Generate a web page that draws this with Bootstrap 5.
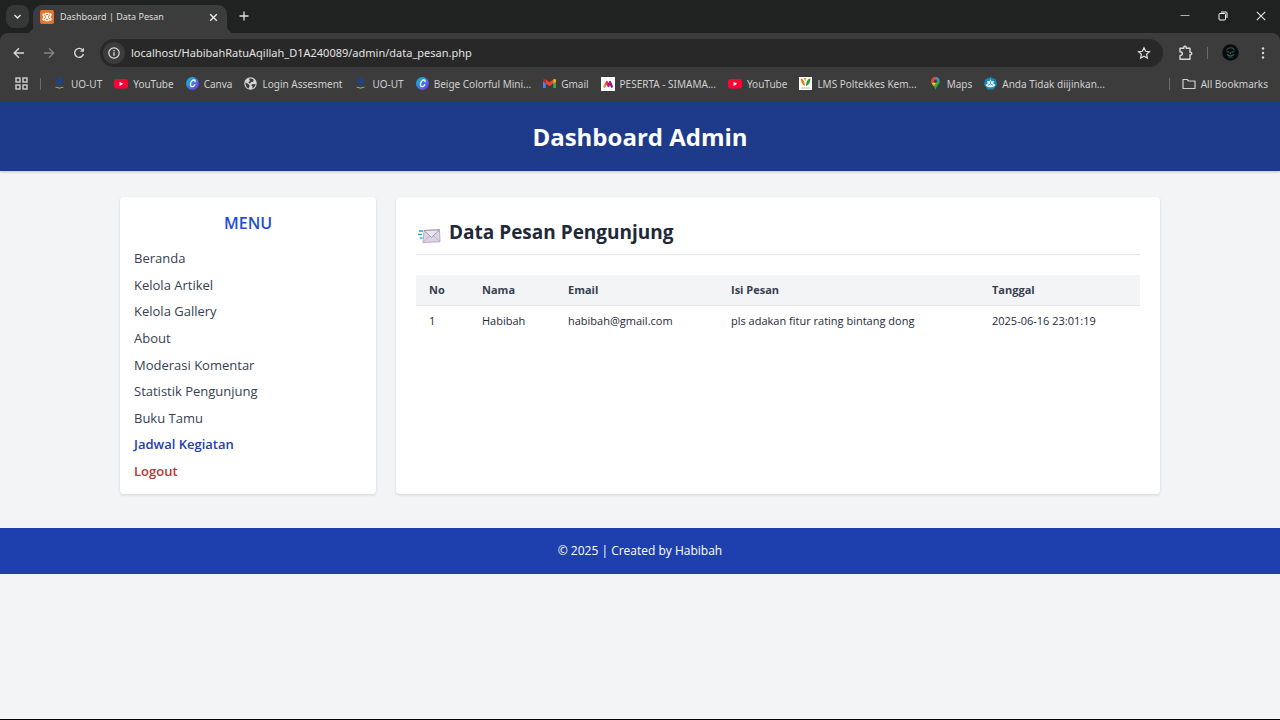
<!DOCTYPE html>
<html lang="id">
<head>
<meta charset="utf-8">
<meta name="viewport" content="width=device-width, initial-scale=1">
<title>Dashboard | Data Pesan</title>
<link rel="stylesheet" href="https://cdn.jsdelivr.net/npm/bootstrap@5.3.0/dist/css/bootstrap.min.css">
<style>
  body { font-family: "Open Sans", "Noto Sans", sans-serif; background: #f3f4f6; color: #1f2937; border-bottom: 1px solid #000; }
  svg { display: block; flex: none; }
  .plain { background: none; border: 0; padding: 0; color: inherit; display: flex; align-items: center; justify-content: center; flex: none; }

  /* browser window */
  .chrome-ui { font-family: "Noto Sans", sans-serif; font-size: 10px; line-height: 16px; color: #dedede; background: #3c3c3c; }
  .titlebar { height: 33px; background: #1f2221; padding: 5px 12px 0 6px; }
  .tab-search { width: 23px; height: 23px; border-radius: 8px; background: #353836; }
  .tab-item { position: relative; width: 194px; height: 28px; margin-left: 4px; padding: 0 9px 4px 7px; gap: 6px; border-radius: 9px 9px 0 0; background: #3c3c3c; font-size: 9px; }
  .tab-item::before, .tab-item::after { content: ""; position: absolute; bottom: 0; width: 7px; height: 7px; }
  .tab-item::before { right: 100%; background: radial-gradient(circle at 0 0, #1f2221 7px, #3c3c3c 7px); }
  .tab-item::after { left: 100%; background: radial-gradient(circle at 100% 0, #1f2221 7px, #3c3c3c 7px); }
  .win-btn { width: 14px; height: 22px; }
  .new-tab { margin-left: 10px; }
  .toolbar { height: 39px; padding: 0 15px 0 12px; background: #3c3c3c; border-radius: 8px 8px 0 0; }
  .corner-bg { background: #1f2221; }
  .nav-btn { width: 14px; height: 24px; }
  .tools { gap: 14px; }
  .omnibox { height: 28px; border-radius: 14px; background: #282828; padding: 0 12px 0 3px; margin-left: 14px; gap: 6px; }
  .info-btn { width: 22px; height: 22px; border-radius: 50%; background: #3c3c3c; }
  .address { background: none; border: 0; outline: 0; padding: 0; color: #e3e3e3; font-size: 11px; line-height: 18px; }
  .divider { width: 1px; height: 12px; background: #6a6a6a; flex: none; }
  .bookmarks { height: 29px; padding: 0 12px 6px 15px; gap: 12px; }
  .links { gap: 12px; }
  .bookmark { display: flex; align-items: center; gap: 5px; color: #d0d0d0; text-decoration: none; white-space: nowrap; }

  /* page */
  .page-head { background: #1e3a8a; height: 70px; padding-top: 2px; box-shadow: 0 1px 3px rgba(0,0,0,.2); }
  .page-head h1 { font-size: 24px; line-height: 32px; }
  .wrap { max-width: 1040px; padding: 26px 0 34px; gap: 20px; }
  .panel { background: #fff; border-radius: 4px; box-shadow: 0 1px 3px rgba(0,0,0,.14); min-height: 297px; }
  .side { width: 256px; flex: none; padding: 14px 14px 13px; }
  .side h2 { font-size: 16px; line-height: 24px; color: #1d4ed8; margin-bottom: 13px; }
  .side a { display: block; font-size: 13px; line-height: 20px; color: #374151; text-decoration: none; }
  .side a.current { color: #1e40af; font-weight: 600; }
  .side a.leave { color: #c53030; font-weight: 600; }
  .content { padding: 20px; min-width: 0; }
  .content h2 { font-size: 19px; line-height: 30px; padding-bottom: 7px; margin-bottom: 20px; border-bottom: 1px solid #e5e7eb; gap: 8px; }
  .messages { font-size: 11px; line-height: 18px; }
  .messages th { background: #f3f4f6; color: #374151; font-weight: 700; padding: 6px 13px; border-bottom: 1px solid #e5e7eb; }
  .messages td { padding: 6px 13px; }
  .c-no { width: 53px; } .c-name { width: 86px; } .c-mail { width: 163px; } .c-text { width: 261px; }
  .page-foot { background: #1e40af; height: 46px; font-size: 12px; line-height: 20px; }
</style>
</head>
<body class="min-vh-100">

<svg width="0" height="0" class="position-absolute" aria-hidden="true">
  <defs>
    <linearGradient id="cg" x1="0" y1="0" x2="1" y2="1"><stop offset="0" stop-color="#00c4cc"/><stop offset=".5" stop-color="#3f7fe4"/><stop offset="1" stop-color="#7d2ae8"/></linearGradient>
    <linearGradient id="mg" x1="0" y1="0" x2="1" y2="0"><stop offset="0" stop-color="#f0a030"/><stop offset=".5" stop-color="#d4145a"/><stop offset="1" stop-color="#5b2a9a"/></linearGradient>
    <symbol id="i-ut" viewBox="0 0 13 13"><path d="M6.500 0c1 0 1.500.8 1.500 1.500 1 0 2 .8 1.500 2.500.8 1 .5 2.800-1 3.500L7.500 9h-2l-1-1.500C3 6.800 2.700 5 3.500 4 3 2.300 4 1.500 5 1.500 5 .8 5.500 0 6.500 0z" fill="#1d4480"/><path d="M2.500 10.200c1.500.1 2.800.4 4 1 1.200-.6 2.500-.9 4-1" fill="none" stroke="#a8a14a" stroke-width="1.100"/></symbol>
    <symbol id="i-yt" viewBox="0 0 14 13"><rect y="2" width="14" height="9.500" rx="2.200" fill="#ff0033"/><path d="M5.500 4.700v4.200l3.700-2.100z" fill="#fff"/></symbol>
    <symbol id="i-canva" viewBox="0 0 13 13"><circle cx="6.500" cy="6.500" r="6.500" fill="url(#cg)"/><path d="M9 4.700c.3-1.200-.3-1.800-1.200-1.700C5.800 3.200 4.500 5.500 4.500 7.500c0 1.500.8 2.300 2 2.100 1-.1 1.900-.8 2.400-1.800" fill="none" stroke="#fff" stroke-width="1.300" stroke-linecap="round"/></symbol>
    <symbol id="i-globe" viewBox="0 0 13 13"><circle cx="6.500" cy="6.500" r="6.200" fill="#d5d5d5"/><path d="M1.500 5.500l3 1.500 1.200 1.800-1 2.700C2.500 10.700 1.200 8.500 1.500 5.500zM5 1.800c2-.6 3.500 0 4.800 1.200L9 4.700 7 5 6 6.700 4.200 5.200 6 4zM8 7.300l3.500-.3c-.1 2-1.500 3.800-3.400 4.500L8.700 9.500 7.300 8.500z" fill="#3c3c3c"/></symbol>
    <symbol id="i-gmail" viewBox="0 0 13 13"><path d="M0 3v8h2.800V5.200z" fill="#4285f4"/><path d="M13 3v8h-2.800V5.200z" fill="#34a853"/><path d="M0 3.200C0 1.900 1.500 1.500 2.800 2.500v4L0 4.500z" fill="#c5221f"/><path d="M13 3.200c0-1.300-1.500-1.700-2.800-.7v4L13 4.500z" fill="#fbbc04"/><path d="M2.800 2.500L6.500 5.300l3.700-2.800v4L6.500 9.300 2.800 6.500z" fill="#ea4335"/></symbol>
    <symbol id="i-sima" viewBox="0 0 14 14"><rect width="14" height="14" fill="#fff"/><path d="M3 10.500L5.700 5l1.800 4 1.500-4 2.200 5.500" fill="none" stroke="url(#mg)" stroke-width="2.200" stroke-linejoin="round"/></symbol>
    <symbol id="i-lms" viewBox="0 0 13 13"><rect width="13" height="13" fill="#fff"/><path d="M1.500 1.500c2 0 4 2 4.500 7.500C3.500 8 2 5.500 1.500 1.500z" fill="#f07a20"/><path d="M4.500 1h3L6.500 4z" fill="#e5a11c"/><path d="M11.500 1.500c-2.500.2-4.500 2.500-4.500 7.500 3-1 4.200-3.500 4.500-7.500z" fill="#2f9a3c"/><path d="M2 11h9" stroke="#b5b8a0"/></symbol>
    <symbol id="i-maps" viewBox="0 0 10 14"><path d="M5 0a4.600 4.600 0 0 1 4.600 4.700C9.600 8 5.900 9.500 5 14 4.100 9.500.4 8 .4 4.700A4.600 4.600 0 0 1 5 0z" fill="#34a853"/><path d="M5 0a4.600 4.600 0 0 1 4.300 3L5.500 5.500 3 1z" fill="#4285f4"/><path d="M1.200 2A4.600 4.600 0 0 1 5 0L6 1 2.500 5z" fill="#ea4335"/><path d="M1.200 2C.2 3.500.1 6 1.700 8L6 3z" fill="#ea4335"/><path d="M.8 6.500c.6 1.300 1.400 2 2.200 3.100L7 5z" fill="#fbbc04"/><circle cx="5" cy="4.700" r="1.700" fill="#3c3c3c"/></symbol>
    <symbol id="i-anda" viewBox="0 0 13 13"><path d="M6.500 0l5.300 2.500L13 7.500l-3.500 5h-6L0 7.500l1.200-5z" fill="#1787b8"/><path d="M6.500 2l1 2.500 2.500-.5-.8 2.500 2.300 1.200c-1 2-2.500 2.500-5 2.500s-4-.5-5-2.500l2.300-1.200L3 4l2.500.5z" fill="#e8f3f7"/><path d="M4 8.300L6.500 7 9 8.300M6.500 4.500V7" fill="none" stroke="#1787b8" stroke-width=".8"/></symbol>
  </defs>
</svg>

<div class="chrome-ui">
  <div class="titlebar d-flex align-items-start">
    <button class="tab-search plain" aria-label="Cari tab"><svg width="9" height="9" viewBox="0 0 9 9"><path d="M1.500 3l3 3 3-3" fill="none" stroke="#e8e8e8" stroke-width="1.400"/></svg></button>
    <div class="tab-item d-flex align-items-center">
      <svg width="14" height="14" viewBox="0 0 14 14"><rect width="14" height="14" rx="2" fill="#e0762c"/><path d="M7 7C6 4.500 3.200 3 3 4.700 2.900 6 4 6.300 4.700 7 4 7.700 2.900 8 3 9.300 3.200 11 6 9.500 7 7c1 2.500 3.800 4 4 2.300.1-1.300-1-1.600-1.700-2.300.7-.7 1.800-1 1.700-2.300C10.800 3 8 4.500 7 7zM5 3.300h4M5 10.700h4" fill="none" stroke="#fff" stroke-width="1.300"/></svg>
      <span class="flex-grow-1 text-truncate">Dashboard | Data Pesan</span>
      <button class="plain" aria-label="Tutup tab"><svg width="9" height="9" viewBox="0 0 9 9"><path d="M1.200 1.200l6.600 6.600m0-6.600L1.200 7.800" stroke="#f0f0f0" stroke-width="1.300"/></svg></button>
    </div>
    <button class="plain win-btn new-tab me-auto" aria-label="Tab baru"><svg width="10" height="10" viewBox="0 0 10 10"><path d="M5 .5v9M.5 5h9" stroke="#e0e0e0" stroke-width="1.300"/></svg></button>
    <div class="d-flex gap-4">
      <button class="plain win-btn" aria-label="Minimalkan"><svg width="10" height="10" viewBox="0 0 10 10"><path d="M.5 4.500h9" stroke="#b0b0b0"/></svg></button>
      <button class="plain win-btn" aria-label="Pulihkan"><svg width="10" height="10" viewBox="0 0 10 10"><rect x="1" y="2.500" width="6.500" height="6.500" rx="1" fill="none" stroke="#fff"/><path d="M3 1h5q1 0 1 1v5" fill="none" stroke="#fff"/></svg></button>
      <button class="plain win-btn" aria-label="Tutup"><svg width="10" height="10" viewBox="0 0 10 10"><path d="M.8.8l8.400 8.400m0-8.400L.8 9.200" stroke="#e8e8e8" stroke-width="1.100"/></svg></button>
    </div>
  </div>

  <div class="corner-bg">
  <div class="toolbar d-flex align-items-center">
    <div class="d-flex gap-3">
      <button class="plain nav-btn" aria-label="Kembali"><svg width="12" height="12" viewBox="0 0 12 12"><path d="M11 6H1.500M6 1.200L1.200 6 6 10.800" fill="none" stroke="#d8d8d8" stroke-width="1.400"/></svg></button>
      <button class="plain nav-btn" aria-label="Maju"><svg width="12" height="12" viewBox="0 0 12 12"><path d="M1 6h9.500M6 1.200L10.800 6 6 10.800" fill="none" stroke="#858585" stroke-width="1.300"/></svg></button>
      <button class="plain nav-btn" aria-label="Muat ulang"><svg width="12" height="12" viewBox="0 0 12 12"><path d="M10 3.500A4.500 4.500 0 1 0 10.500 7" fill="none" stroke="#d8d8d8" stroke-width="1.400"/><path d="M11 .8v4H7z" fill="#d8d8d8"/></svg></button>
    </div>
    <div class="omnibox d-flex align-items-center flex-grow-1">
      <button class="info-btn plain" aria-label="Informasi situs"><svg width="12" height="12" viewBox="0 0 12 12"><circle cx="6" cy="6" r="5.200" fill="none" stroke="#e0e0e0" stroke-width="1.200"/><path d="M6 5.300v3.500M6 3v1.300" stroke="#e0e0e0" stroke-width="1.300"/></svg></button>
      <input class="address flex-grow-1" type="text" aria-label="Alamat" value="localhost/HabibahRatuAqillah_D1A240089/admin/data_pesan.php">
      <button class="plain" aria-label="Tandai halaman"><svg width="14" height="14" viewBox="0 0 14 14"><path d="M7 1.800l1.600 3.500 3.800.4-2.800 2.600.8 3.800L7 10.200l-3.400 1.900.8-3.800L1.600 5.700l3.800-.4z" fill="none" stroke="#dcdcdc" stroke-width="1.200"/></svg></button>
    </div>
    <div class="tools d-flex align-items-center ms-3">
      <button class="plain" aria-label="Ekstensi"><svg width="14" height="16" viewBox="0 0 14 16"><path d="M1 3.200h3.800V2q1.200-1.400 2.400 0v1.200H11v4h1q1.500 1.200 0 2.400h-1v4.600H1v-3.600q2.400-.2 2.400-1.900T1 6.800z" fill="none" stroke="#d8d8d8" stroke-width="1.400" stroke-linejoin="round"/></svg></button>
      <span class="divider"></span>
      <button class="plain" aria-label="Profil"><svg width="17" height="17" viewBox="0 0 17 17"><circle cx="8.500" cy="8.500" r="8.300" fill="#080d0e"/><path d="M4.500 6Q6 4 8.500 3.800T12.500 6M4.500 7.500l3 .7M12.500 7.500l-3 .7M8.500 8v2M5 10.500q3.500 2.500 7 0M6.500 13h4" fill="none" stroke="#345a5c" stroke-width="1.100"/></svg></button>
      <button class="plain ms-2" aria-label="Menu browser"><svg width="4" height="14" viewBox="0 0 4 14"><g fill="#dcdcdc"><circle cx="2" cy="2.500" r="1.200"/><circle cx="2" cy="7" r="1.200"/><circle cx="2" cy="11.500" r="1.200"/></g></svg></button>
    </div>
  </div>
  </div>

  <nav class="bookmarks d-flex align-items-center" aria-label="Bookmark">
    <button class="plain" aria-label="Grup tab"><svg width="13" height="13" viewBox="0 0 13 13"><g fill="none" stroke="#cfcfcf" stroke-width="1.400"><rect x="1" y="1" width="4" height="4"/><rect x="8" y="1" width="4" height="4"/><rect x="1" y="8" width="4" height="4"/><rect x="8" y="8" width="4" height="4"/></g></svg></button>
    <span class="divider"></span>
    <div class="d-flex flex-grow-1 links">
      <a class="bookmark" href="#"><svg width="13" height="13"><use href="#i-ut"/></svg>UO-UT</a>
      <a class="bookmark" href="#"><svg width="14" height="13"><use href="#i-yt"/></svg>YouTube</a>
      <a class="bookmark" href="#"><svg width="13" height="13"><use href="#i-canva"/></svg>Canva</a>
      <a class="bookmark" href="#"><svg width="13" height="13"><use href="#i-globe"/></svg>Login Assesment</a>
      <a class="bookmark" href="#"><svg width="13" height="13"><use href="#i-ut"/></svg>UO-UT</a>
      <a class="bookmark" href="#"><svg width="13" height="13"><use href="#i-canva"/></svg>Beige Colorful Mini...</a>
      <a class="bookmark" href="#"><svg width="13" height="13"><use href="#i-gmail"/></svg>Gmail</a>
      <a class="bookmark" href="#"><svg width="14" height="14"><use href="#i-sima"/></svg>PESERTA - SIMAMA...</a>
      <a class="bookmark" href="#"><svg width="14" height="13"><use href="#i-yt"/></svg>YouTube</a>
      <a class="bookmark" href="#"><svg width="13" height="13"><use href="#i-lms"/></svg>LMS Poltekkes Kem...</a>
      <a class="bookmark" href="#"><svg width="13" height="13"><use href="#i-maps"/></svg>Maps</a>
      <a class="bookmark" href="#"><svg width="13" height="13"><use href="#i-anda"/></svg>Anda Tidak diijinkan...</a>
    </div>
    <span class="divider"></span>
    <a class="bookmark" href="#"><svg width="14" height="12" viewBox="0 0 14 12"><path d="M1 10.500V1.500h4.200l1.300 1.500H13v7.500z" fill="none" stroke="#d0d0d0" stroke-width="1.200" stroke-linejoin="round"/></svg>All Bookmarks</a>
  </nav>
</div>

<header class="page-head d-flex align-items-center justify-content-center text-white position-relative">
  <h1 class="m-0 fw-bold">Dashboard Admin</h1>
</header>

<div class="wrap d-flex mx-auto">
  <aside class="panel side d-flex flex-column">
    <h2 class="text-center fw-semibold">MENU</h2>
    <ul class="list-unstyled mb-0 flex-grow-1 d-flex flex-column justify-content-between">
      <li><a href="#">Beranda</a></li>
      <li><a href="#">Kelola Artikel</a></li>
      <li><a href="#">Kelola Gallery</a></li>
      <li><a href="#">About</a></li>
      <li><a href="#">Moderasi Komentar</a></li>
      <li><a href="#">Statistik Pengunjung</a></li>
      <li><a href="#">Buku Tamu</a></li>
      <li><a class="current" href="#">Jadwal Kegiatan</a></li>
      <li><a class="leave" href="#">Logout</a></li>
    </ul>
  </aside>
  <main class="panel content flex-grow-1">
    <h2 class="fw-bold d-flex align-items-center">
      <svg width="25" height="25" viewBox="0 -5 25 25" role="img" aria-label="Pesan masuk"><path d="M3 6h4M2 9.500h4M4 13h2.500" stroke="#1fa8e0" stroke-width="1.400"/><path d="M8 5.500l15.500-.7.500 12L7 17.500z" fill="#ddd5e3" stroke="#a99fb4" stroke-width=".8"/><path d="M7.200 17.300l6.300-6.500M24 16.600l-7-6" stroke="#b9aec4" stroke-width=".8"/><path d="M8 5.500l7.500 7 8-7.700z" fill="#ebe5ef" stroke="#978ba4" stroke-width=".9"/></svg>
      Data Pesan Pengunjung
    </h2>
    <table class="messages w-100">
      <colgroup><col class="c-no"><col class="c-name"><col class="c-mail"><col class="c-text"><col></colgroup>
      <thead><tr><th scope="col">No</th><th scope="col">Nama</th><th scope="col">Email</th><th scope="col">Isi Pesan</th><th scope="col">Tanggal</th></tr></thead>
      <tbody><tr><td>1</td><td>Habibah</td><td>habibah@gmail.com</td><td>pls adakan fitur rating bintang dong</td><td>2025-06-16 23:01:19</td></tr></tbody>
    </table>
  </main>
</div>

<footer class="page-foot d-flex align-items-center justify-content-center text-white">© 2025 | Created by Habibah</footer>

<script src="https://cdn.jsdelivr.net/npm/bootstrap@5.3.0/dist/js/bootstrap.bundle.min.js"></script>
</body>
</html>
